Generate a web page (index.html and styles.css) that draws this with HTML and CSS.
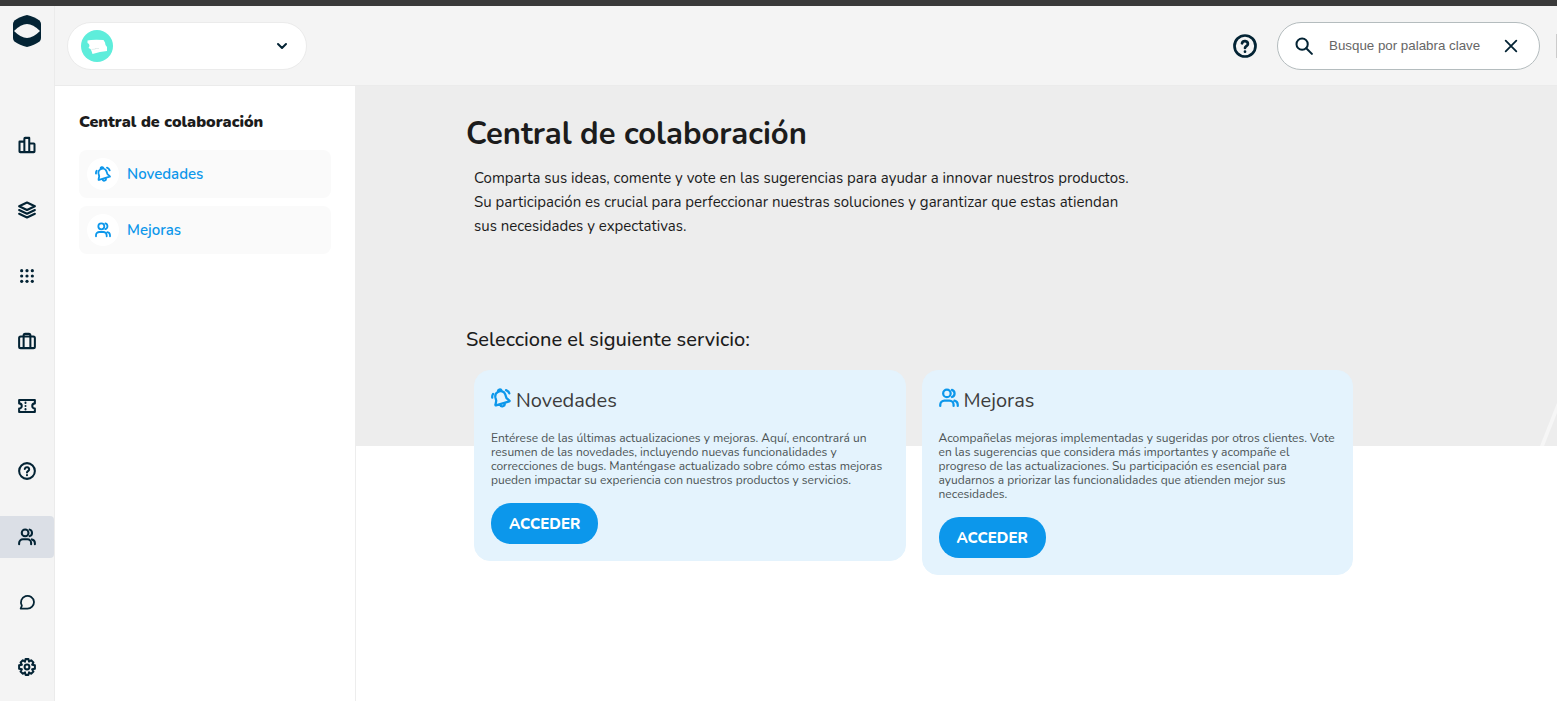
FILE: index.html
```html
<!DOCTYPE html>
<html lang="es">
<head>
  <meta charset="UTF-8" />
  <meta name="viewport" content="width=device-width, initial-scale=1" />
  <title>Central de colaboración</title>
  <link rel="stylesheet" href="styles.css">
</head>
<body>

  <!-- Iconos -->
  <svg class="sprite" aria-hidden="true">
    <symbol id="i-chart" viewBox="0 0 24 24"><path d="M2 7.500h6.500V21.500H3a1 1 0 0 1-1-1zM8.500 21.500V3.500a1 1 0 0 1 1-1h5.500v19zM15 10h6a1 1 0 0 1 1 1v9.500a1 1 0 0 1-1 1H8.500" /></symbol>
    <symbol id="i-layers" viewBox="0 0 24 24"><path d="M12 2l10.500 5-10.500 5L1.500 7zM1.500 12L12 17l10.500-5M1.500 17L12 22l10.500-5" /></symbol>
    <symbol id="i-grid" viewBox="0 0 24 24"><g fill="currentColor" stroke="none"><circle cx="4" cy="4" r="2.400" /><circle cx="12" cy="4" r="2.400" /><circle cx="20" cy="4" r="2.400" /><circle cx="4" cy="12" r="2.400" /><circle cx="12" cy="12" r="2.400" /><circle cx="20" cy="12" r="2.400" /><circle cx="4" cy="20" r="2.400" /><circle cx="12" cy="20" r="2.400" /><circle cx="20" cy="20" r="2.400" /></g></symbol>
    <symbol id="i-case" viewBox="0 0 24 24"><rect x="1.500" y="6" width="21" height="15.500" rx="2" /><path d="M7.500 21V4.500a2 2 0 0 1 2-2h5a2 2 0 0 1 2 2V21" /></symbol>
    <symbol id="i-ticket" viewBox="0 0 24 24"><path d="M1.500 4h21v4.500a3.500 3.500 0 0 0 0 7V20h-21v-4.500a3.500 3.500 0 0 0 0-7z" /><path d="M10 7.500v.5M10 12v.100M10 16v.500" /></symbol>
    <symbol id="i-help" viewBox="0 0 24 24"><circle cx="12" cy="12" r="10.500" /><path d="M9 9.300a3 3 0 0 1 5.900.7c0 2-2.900 2.300-2.900 4M12 17.500v.200" /></symbol>
    <symbol id="i-users" viewBox="0 0 24 24"><circle cx="9.500" cy="6.500" r="4.500" /><path d="M1.500 21.500V20a5 5 0 0 1 5-5h6a5 5 0 0 1 5 5v1.500M15.500 2.200a4.500 4.500 0 0 1 0 8.600M18.500 15.200a5 5 0 0 1 4 4.800v1.500" /></symbol>
    <symbol id="i-chat" viewBox="0 0 24 24"><path d="M22.500 12a9.800 9.800 0 0 1-9.800 9.800H2.500l1.800-4.200A9.800 9.800 0 1 1 22.500 12z" /></symbol>
    <symbol id="i-gear" viewBox="0 0 24 24"><circle cx="12" cy="12" r="3.200" /><path d="M10 1.500h4l.7 3.300 2.800-1.800 3.100 3.100-1.800 2.800 3.700.9v4.400l-3.700.9 1.800 2.800-3.100 3.100-2.800-1.800-.7 3.300h-4l-.7-3.300L6.500 21l-3.100-3.100 1.800-2.800-3.700-.9V9.800l3.700-.9-1.800-2.800L6.500 3l2.800 1.800z" /></symbol>
    <symbol id="i-bell" viewBox="0 0 24 24"><path d="M8.300 4.900a5.800 5.800 0 0 1 8.800 2.800l1.500 4.400 3.600 3.100a.5.500 0 0 1-.2.900L6 20.900a.5.500 0 0 1-.7-.6l1-5-1-4a5.800 5.800 0 0 1 3-6.400zM8.500 4.500a2.200 2.200 0 0 1 4.200-1.300M11 20a2.600 2.600 0 0 0 5.300-1.500M1.500 11.500a6.500 6.500 0 0 1 1-4.500M18 2.500a6.500 6.500 0 0 1 4 4" /></symbol>
    <symbol id="i-search" viewBox="0 0 24 24"><circle cx="9.500" cy="9.500" r="7.500" /><path d="M15 15l7.500 7.500" /></symbol>
    <symbol id="i-close" viewBox="0 0 24 24"><path d="M4 4l16 16M20 4L4 20" /></symbol>
    <symbol id="i-down" viewBox="0 0 24 24"><path d="M4 8l8 8 8-8" /></symbol>
  </svg>

  <div class="app">
    <!-- Menú lateral -->
    <aside class="rail">
      <a class="logo" href="#" aria-label="Inicio">
        <svg viewBox="0 0 28 32" width="28" height="32"><path fill="#032334" d="M14 0c5 1 9 3 12.500 5.500Q28 7 28 9v14q0 2-1.500 3.500C23 29 19 31 14 32 9 31 5 29 1.500 26.500Q0 25 0 23V9q0-2 1.500-3.500C5 3 9 1 14 0z" /><path fill="#f4f4f4" d="M1 16Q8 9 14 9t13 7q-7 7-13 7T1 16z" /></svg>
      </a>
      <nav class="rail-nav">
        <a href="#" aria-label="Indicadores"><svg class="icon"><use href="#i-chart" /></svg></a>
        <a href="#" aria-label="Productos"><svg class="icon"><use href="#i-layers" /></svg></a>
        <a href="#" aria-label="Aplicaciones"><svg class="icon icon-small"><use href="#i-grid" /></svg></a>
        <a href="#" aria-label="Servicios"><svg class="icon"><use href="#i-case" /></svg></a>
        <a href="#" aria-label="Tickets"><svg class="icon"><use href="#i-ticket" /></svg></a>
        <a href="#" aria-label="Ayuda"><svg class="icon"><use href="#i-help" /></svg></a>
        <a class="active" href="#" aria-label="Central de colaboración"><svg class="icon"><use href="#i-users" /></svg></a>
        <a href="#" aria-label="Chat"><svg class="icon icon-small"><use href="#i-chat" /></svg></a>
        <a href="#" aria-label="Configuración"><svg class="icon"><use href="#i-gear" /></svg></a>
      </nav>
    </aside>

    <div class="page">
      <!-- Barra superior -->
      <header class="topbar">
        <div class="account">
          <svg class="avatar" viewBox="0 0 32 32"><circle cx="16" cy="16" r="16" fill="#5eeddb" /><path fill="#fff" d="M6.500 10.500q4-1 16-.5l1.500 2.500.5 2.500 1.500 2v4l-7 1-7.500 2-1-3-1-2-2-1 1-2-.5-2-1.500-1z" /><path d="M10.500 19.500l4-.5M14 18.500h4" stroke="#c9dad8" stroke-width=".5" /></svg>
          <select class="account-select" aria-label="Cuenta">
            <option></option>
          </select>
          <svg class="icon icon-down"><use href="#i-down" /></svg>
        </div>
        <div class="tools">
          <button class="tool" type="button" aria-label="Ayuda"><svg class="icon icon-big"><use href="#i-help" /></svg></button>
          <form class="search">
            <svg class="icon"><use href="#i-search" /></svg>
            <input type="text" placeholder="Busque por palabra clave" aria-label="Busque por palabra clave" />
            <button class="tool" type="reset" aria-label="Limpiar"><svg class="icon icon-small"><use href="#i-close" /></svg></button>
          </form>
          <span class="divider"></span>
        </div>
      </header>

      <div class="body">
        <aside class="side">
          <h2>Central de colaboración</h2>
          <a class="side-link" href="#"><span class="dot"><svg class="icon icon-small"><use href="#i-bell" /></svg></span>Novedades</a>
          <a class="side-link" href="#"><span class="dot"><svg class="icon icon-small"><use href="#i-users" /></svg></span>Mejoras</a>
        </aside>

        <main class="main">
          <svg class="stripe" viewBox="0 0 17 43"><path d="M0 43L17 0v10L4 43z" fill="#f6f6f6" /></svg>
          <div class="content">
            <h1>Central de colaboración</h1>
            <p class="intro">Comparta sus ideas, comente y vote en las sugerencias para ayudar a innovar nuestros productos. Su participación es crucial para perfeccionar nuestras soluciones y garantizar que estas atiendan sus necesidades y expectativas.</p>

            <h2 class="subtitle">Seleccione el siguiente servicio:</h2>
            <div class="cards">
              <section class="card">
                <h3><svg class="icon icon-card"><use href="#i-bell" /></svg>Novedades</h3>
                <p>Entérese de las últimas actualizaciones y mejoras. Aquí, encontrará un resumen de las novedades, incluyendo nuevas funcionalidades y correcciones de bugs. Manténgase actualizado sobre cómo estas mejoras pueden impactar su experiencia con nuestros productos y servicios.</p>
                <button class="btn" type="button">ACCEDER</button>
              </section>
              <section class="card">
                <h3><svg class="icon icon-card"><use href="#i-users" /></svg>Mejoras</h3>
                <p>Acompañelas mejoras implementadas y sugeridas por otros clientes. Vote en las sugerencias que considera más importantes y acompañe el progreso de las actualizaciones. Su participación es esencial para ayudarnos a priorizar las funcionalidades que atienden mejor sus necesidades.</p>
                <button class="btn" type="button">ACCEDER</button>
              </section>
            </div>
          </div>
        </main>
      </div>
    </div>
  </div>

</body>
</html>
```

FILE: styles.css
```css
* {
  box-sizing: border-box;
}

body {
  margin: 0;
  font-family: Nunito, Lato, sans-serif;
  color: #1c1c1c;
  background: #fff;
}

h1, h2, h3, p {
  margin: 0;
}

a {
  text-decoration: none;
}

.sprite {
  display: none;
}

.icon {
  width: 18px;
  height: 18px;
  flex: none;
  fill: none;
  stroke: currentColor;
  stroke-width: 2.7;
  stroke-linecap: round;
  stroke-linejoin: round;
}

.icon-small {
  width: 16px;
  height: 16px;
}

.icon-big {
  width: 24px;
  height: 24px;
}

.icon-card {
  width: 20px;
  height: 20px;
}

.app {
  display: flex;
  min-height: 100vh;
  border-top: 6px solid #3a3a3a;
}

/* Menú lateral */
.rail {
  display: flex;
  flex-direction: column;
  width: 55px;
  flex: none;
  background: #f4f4f4;
  border-right: 1px solid #ebebeb;
}

.logo {
  display: flex;
  justify-content: center;
  padding: 9px 0 77px;
}

.rail-nav {
  display: flex;
  flex-direction: column;
  justify-content: space-between;
  flex: 1;
  padding-bottom: 13px;
}

.rail-nav a {
  display: flex;
  align-items: center;
  justify-content: center;
  height: 42px;
  color: #032334;
  border-radius: 0 4px 4px 0;
}

.rail-nav a.active {
  background: #dbdfe6;
}

.page {
  display: flex;
  flex-direction: column;
  flex: 1;
  min-width: 0;
}

/* Barra superior */
.topbar {
  display: flex;
  align-items: center;
  justify-content: space-between;
  height: 80px;
  padding-left: 12px;
  background: #f4f4f4;
  border-bottom: 1px solid #ebebeb;
}

.account {
  display: flex;
  align-items: center;
  width: 240px;
  height: 48px;
  padding: 0 18px 0 13px;
  background: #fff;
  border: 1px solid #ebebeb;
  border-radius: 24px;
}

.avatar {
  width: 32px;
  height: 32px;
}

.account-select {
  appearance: none;
  flex: 1;
  min-width: 0;
  height: 32px;
  border: 0;
  background: none;
}

.icon-down {
  width: 12px;
  height: 12px;
  color: #032334;
  stroke-width: 4;
}

.tools {
  display: flex;
  align-items: center;
}

.tool {
  display: flex;
  padding: 0;
  border: 0;
  background: none;
  color: #032334;
  cursor: pointer;
}

.search {
  display: flex;
  align-items: center;
  width: 263px;
  height: 48px;
  margin: 0 16px 0 20px;
  padding: 0 20px 0 17px;
  background: #fff;
  color: #032334;
  border: 1px solid #b4bcbe;
  border-radius: 24px;
}

.search input {
  flex: 1;
  min-width: 0;
  padding: 0;
  margin-left: 16px;
  border: 0;
  outline: 0;
  background: none;
  font-family: "Liberation Sans", Arial, sans-serif;
}

.search input::placeholder {
  color: #666;
}

.divider {
  width: 1px;
  height: 24px;
  background: #ccc;
}

.body {
  display: flex;
  flex: 1;
}

/* Submenú */
.side {
  display: flex;
  flex-direction: column;
  gap: 8px;
  width: 301px;
  flex: none;
  padding: 24px;
  background: #fff;
  border-right: 1px solid #ededed;
}

.side h2 {
  margin-bottom: 8px;
  font-size: 16px;
  line-height: 24px;
  font-weight: 900;
}

.side-link {
  display: flex;
  align-items: center;
  gap: 8px;
  height: 48px;
  padding: 8px;
  font-size: 15px;
  font-weight: 600;
  color: #0c97eb;
  background: #fafafa;
  border-radius: 8px;
}

.dot {
  display: flex;
  align-items: center;
  justify-content: center;
  width: 32px;
  height: 32px;
  background: #fff;
  border-radius: 50%;
}

/* Contenido */
.main {
  position: relative;
  flex: 1;
  min-width: 0;
  background: linear-gradient(#ededed, #ededed) no-repeat top / 100% 360px;
}

.stripe {
  position: absolute;
  top: 317px;
  right: 0;
  width: 17px;
  height: 43px;
}

.content {
  max-width: 1005px;
  padding: 24px 0 24px 110px;
}

h1 {
  font-size: 31px;
  line-height: 48px;
  font-weight: 700;
}

.intro {
  max-width: 680px;
  margin-top: 8px;
  padding: 0 8px;
  font-size: 15px;
  line-height: 24px;
}

.subtitle {
  margin-top: 88px;
  font-size: 20px;
  line-height: 28px;
  font-weight: 500;
}

.cards {
  display: grid;
  grid-template-columns: 1fr 1fr;
  gap: 16px;
  align-items: start;
  padding: 0 8px;
  margin-top: 16px;
}

.card {
  padding: 16px;
  background: #e4f3fd;
  border: 1px solid #e4f3fd;
  border-radius: 16px;
}

.card h3 {
  display: flex;
  gap: 5px;
  font-size: 20px;
  line-height: 28px;
  font-weight: 400;
  color: #3c3c3c;
}

.card h3 .icon {
  margin-top: 1px;
  color: #0c97eb;
}

.card p {
  margin: 16px 0;
  font-size: 12px;
  line-height: 14px;
  color: #4c5355;
}

.btn {
  height: 41px;
  padding: 0 18px;
  border: 0;
  border-radius: 20px;
  background: #0c97eb;
  color: #fff;
  font-family: inherit;
  font-size: 15px;
  font-weight: 800;
  cursor: pointer;
}
```
